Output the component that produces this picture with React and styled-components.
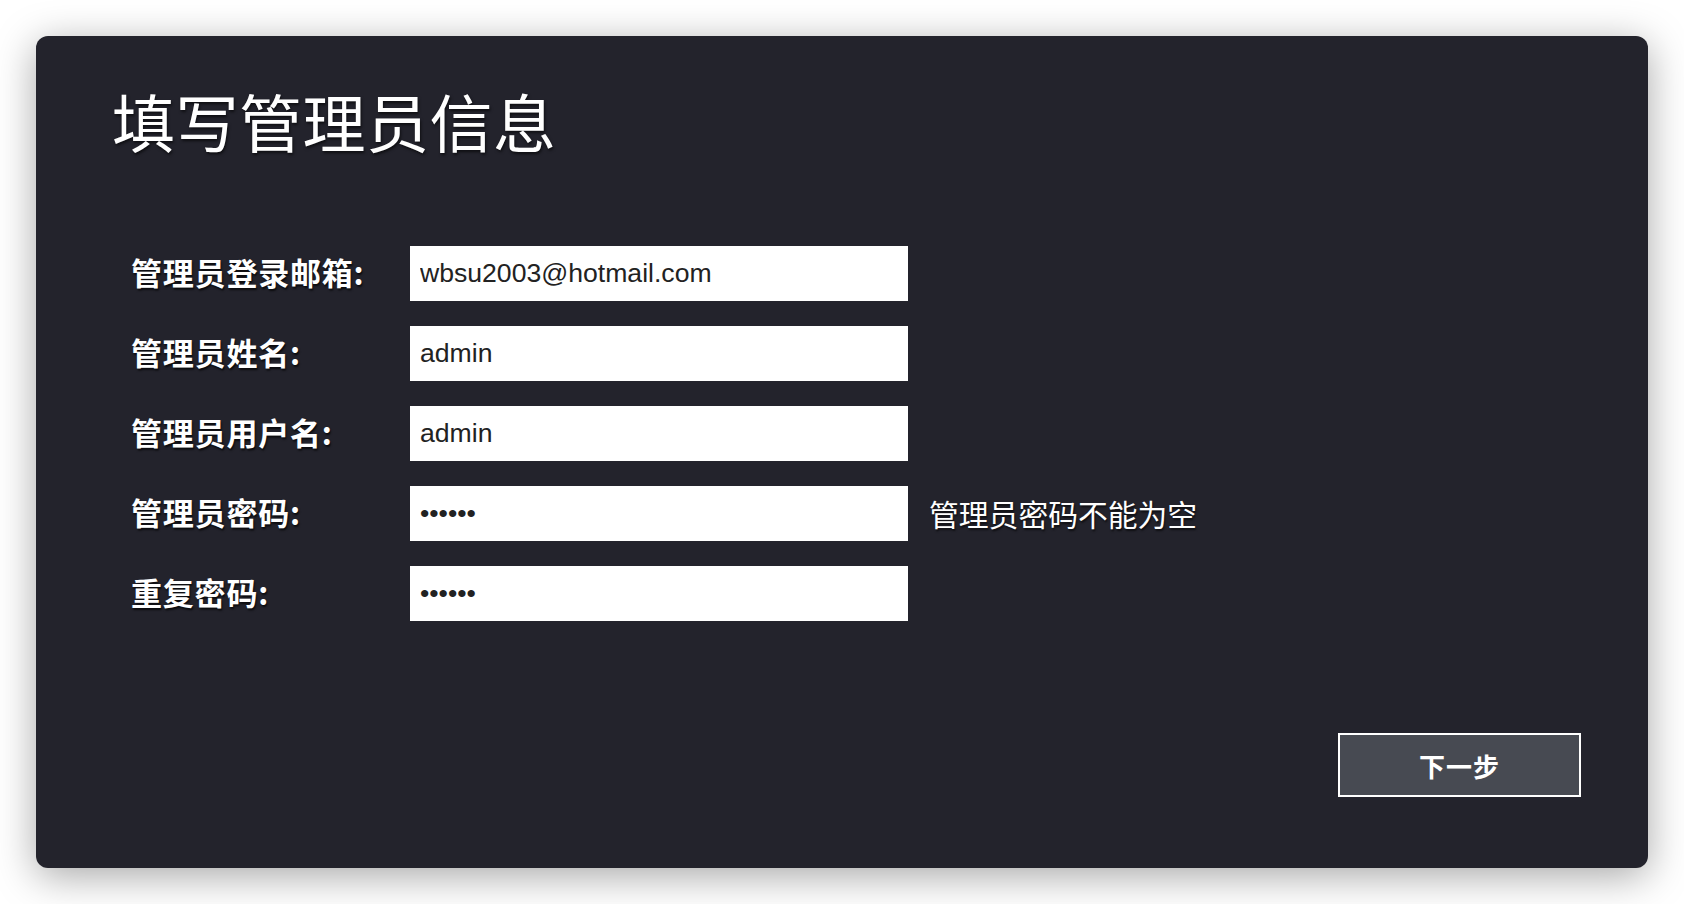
import React from 'react'
import styled, { createGlobalStyle } from 'styled-components'

const GlobalStyle = createGlobalStyle`
  html, body {
    margin: 0;
    padding: 0;
    background: #ffffff;
  }
  * {
    box-sizing: border-box;
  }
`

const fields = [
  { label: '管理员登录邮箱:', type: 'text', value: 'wbsu2003@hotmail.com' },
  { label: '管理员姓名:', type: 'text', value: 'admin' },
  { label: '管理员用户名:', type: 'text', value: 'admin' },
  { label: '管理员密码:', type: 'password', value: '123456', error: '管理员密码不能为空' },
  { label: '重复密码:', type: 'password', value: '123456' },
]

const App = () => {
  return (
    <Page>
      <GlobalStyle />
      <Panel>
        <Title>填写管理员信息</Title>

        <Form onSubmit={(e) => e.preventDefault()}>
          {fields.map((f) => (
            <Row key={f.label}>
              <Label>{f.label}</Label>
              <Input type={f.type} defaultValue={f.value} />
              {f.error && <ErrorText>{f.error}</ErrorText>}
            </Row>
          ))}
        </Form>

        <Footer>
          <NextButton type="button">下一步</NextButton>
        </Footer>
      </Panel>
    </Page>
  )
}

export default App

const Page = styled.div`
  width: 100vw;
  height: 100vh;
  padding: 36px;
`

const Panel = styled.div`
  height: 100%;
  background: #23232c;
  border-radius: 12px;
  box-shadow: 0 8px 40px rgba(0, 0, 0, 0.35);
  display: flex;
  flex-direction: column;
  padding: 52px 67px 71px 76px;
  font-family: "Noto Sans CJK SC", "Liberation Sans", sans-serif;
  color: #ffffff;
`

const Title = styled.h1`
  margin: 0;
  font-size: 63px;
  line-height: 64px;
  font-weight: 400;
  letter-spacing: 0.5px;
  text-shadow: 1px 2px 3px rgba(0, 0, 0, 0.6);
`

const Form = styled.form`
  margin-top: 94px;
  padding-left: 19px;
  display: flex;
  flex-direction: column;
  gap: 25px;
`

const Row = styled.div`
  display: flex;
  align-items: center;
`

const Label = styled.label`
  width: 279px;
  flex: none;
  font-size: 31px;
  font-weight: 700;
  letter-spacing: 0.8px;
  line-height: 1;
  margin-top: -4px;
  text-shadow: 1px 2px 2px rgba(0, 0, 0, 0.7);
`

const Input = styled.input`
  width: 498px;
  height: 55px;
  border: none;
  outline: none;
  background: #ffffff;
  padding: 0 10px;
  font-family: "Liberation Sans", Arial, sans-serif;
  font-size: 26.6px;
  color: #222222;
`

const ErrorText = styled.span`
  margin-left: 21px;
  font-size: 29.8px;
  line-height: 1;
  text-shadow: 1px 2px 2px rgba(0, 0, 0, 0.6);
`

const Footer = styled.div`
  margin-top: auto;
  display: flex;
  justify-content: flex-end;
`

const NextButton = styled.button`
  width: 243px;
  height: 64px;
  background: #474a52;
  border: 2px solid #ffffff;
  color: #ffffff;
  font-family: "Noto Sans CJK SC", sans-serif;
  font-size: 26px;
  font-weight: 700;
  letter-spacing: 1px;
  cursor: pointer;
`
